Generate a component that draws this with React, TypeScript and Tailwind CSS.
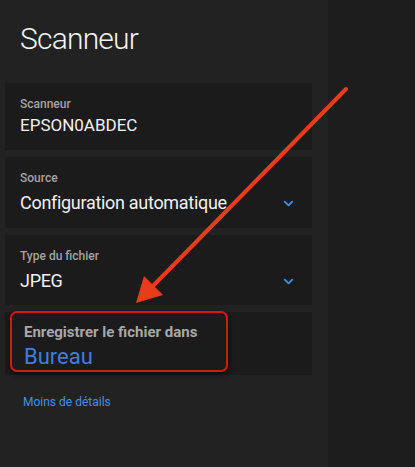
import { ChevronDown } from 'lucide-react';

function Field({ label, value, select, h }: { label: string; value: string; select?: boolean; h: string }) {
  return (
    <div className={`bg-[#1b1b1b] pl-[15px] pr-[16px] flex flex-col ${h}`}>
      <div className="text-[12px] font-medium text-[#a3a3a3] mt-[13px] leading-[16px]">{label}</div>
      <div className="flex items-center justify-between mt-[3px]">
        <div className="text-[18px] text-[#f2f2f2] leading-[28px] tracking-[-0.3px]">{value}</div>
        {select && <ChevronDown size={15} strokeWidth={3} className="text-[#3d8ee8]" />}
      </div>
    </div>
  );
}

export default function App() {
  return (
    <div className="w-[415px] h-[467px] flex bg-[#1d1d1d] relative overflow-hidden" style={{ fontFamily: 'Roboto, "Open Sans", sans-serif' }}>
      <div className="w-[328px] bg-[#222222] px-[5px] flex flex-col">
        <div className="pl-[15px] pt-[17px] h-[83px] text-[30px] font-light text-[#f4f4f4] leading-[44px] tracking-[-0.8px]">Scanneur</div>
        <div className="flex flex-col gap-[7px] w-[307px]">
          <div className="bg-[#1b1b1b] pl-[15px] h-[67px] flex flex-col">
            <div className="text-[12px] font-medium text-[#a3a3a3] mt-[13px] leading-[16px]">Scanneur</div>
            <div className="text-[17px] text-[#f2f2f2] leading-[26px]">EPSON0ABDEC</div>
          </div>
          <Field label="Source" value="Configuration automatique" select h="h-[71px]" />
          <Field label="Type du fichier" value="JPEG" select h="h-[70px]" />
          <div className="bg-[#1b1b1b] pl-[19px] h-[63px] flex flex-col">
            <div className="text-[15px] font-bold text-[#a8a8a8] mt-[10px] leading-[20px]">Enregistrer le fichier dans</div>
            <div className="text-[22px] text-[#3f7fdc] leading-[30px]">Bureau</div>
          </div>
        </div>
        <div className="pl-[18px] mt-[19px] text-[12px] text-[#4a8ee0] leading-[16px]">Moins de détails</div>
      </div>
      <div className="flex-1" />

      {/* highlight box */}
      <div className="absolute left-[10px] top-[311px] w-[218px] h-[61px] rounded-[7px] border-[2px] border-[#d41818] shadow-[0_2px_6px_rgba(0,0,0,0.6)]" />

      {/* arrow */}
      <svg className="absolute left-0 top-0" width="415" height="467" viewBox="0 0 415 467">
        <line x1="346" y1="89" x2="150" y2="289" stroke="#e83c1a" strokeWidth="4" strokeLinecap="round" />
        <polygon points="136,303 144,276 163,295" fill="#e83c1a" />
      </svg>
    </div>
  );
}
